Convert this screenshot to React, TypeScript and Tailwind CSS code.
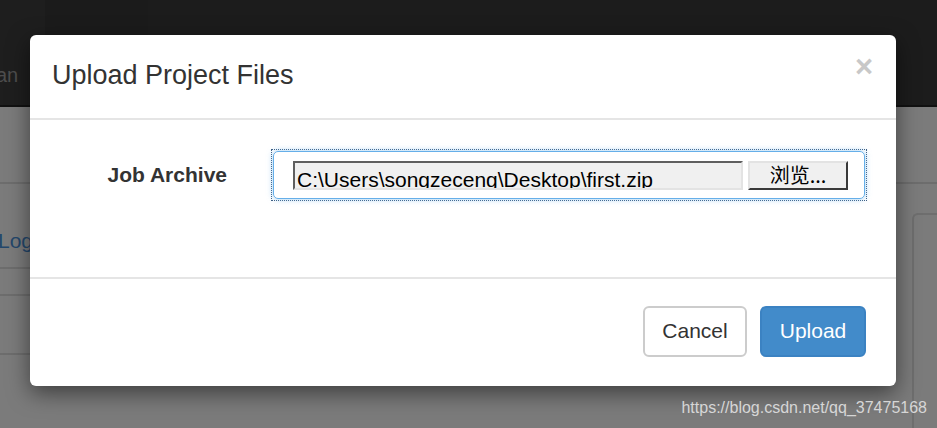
import React from 'react'

// Upload dialog over a dimmed page (150% scaled bootstrap look)
export default function App() {
  return (
    <div className="relative w-[937px] h-[428px] overflow-hidden bg-[#7b7b7b] font-['Liberation_Sans',Arial,sans-serif]">
      {/* dimmed page behind the dialog */}
      <div className="flex h-[107px] bg-[#1c1c1c] border-b-2 border-[#111]">
        <div className="w-[45px] bg-[#1e1e1e] pt-[65px]">
          <span className="block -ml-[4px] text-[20px] leading-none text-[#4d4d4d]">an</span>
        </div>
        <div className="w-[103px] bg-[#1b1b1b]" />
        <div className="flex-1" />
      </div>
      <div className="h-[77px] border-b-2 border-[#6d6d6d]" />
      <div className="flex">
        <div className="w-[60px]">
          <div className="h-[83px] flex items-center">
            <span className="-ml-[2px] mt-[30px] text-[21px] leading-none text-[#24476b]">Log</span>
          </div>
          <div className="h-[27px] border-t-2 border-[#6d6d6d]" />
          <div className="h-[61px] border-t-2 border-b-2 border-[#6d6d6d]" />
        </div>
        <div className="flex-1" />
        <div className="w-[25px] pt-[29px]">
          <div className="h-[240px] rounded-tl-[6px] border-l-2 border-t-2 border-[#6e6e6e]" />
        </div>
      </div>

      {/* modal */}
      <div className="absolute left-[30px] top-[35px] w-[866px] h-[351px] bg-white rounded-[6px] shadow-[0_7px_22px_rgba(0,0,0,0.5)] flex flex-col">
        <div className="h-[85px] shrink-0 flex items-center justify-between px-[22px] border-b-2 border-[#e5e5e5]">
          <h4 className="text-[27px] text-[#333] leading-none -mt-[2px]">Upload Project Files</h4>
          <span className="text-[31px] font-bold text-[#c8c8c8] leading-none -mt-[20px] mr-[1px]">×</span>
        </div>
        <div className="h-[159px] shrink-0 border-b-2 border-[#e5e5e5] pt-[29px] px-[22px] flex items-start">
          <div className="flex items-center">
            <label className="block shrink-0 w-[196px] pr-[21px] text-right text-[21px] font-bold text-[#333]">Job Archive</label>
            <div className="shrink-0 ml-[23px] w-[596px] h-[52px] border border-dotted border-[#3d5d80] p-px">
              <div className="h-full rounded-[5px] border border-[#66afe9] shadow-[0_0_6px_rgba(102,175,233,0.6)] flex items-center pl-[19px]">
                <div className="w-[450px] h-[29px] overflow-hidden bg-[#f0f0f0] border-2 border-t-[#5f5f5f] border-l-[#5f5f5f] border-b-[#e3e3e3] border-r-[#e3e3e3] pl-[2px]">
                  <span className="block text-[21px] leading-[34px] text-black whitespace-nowrap">C:\Users\songzeceng\Desktop\first.zip</span>
                </div>
                <div className="ml-[5px] w-[100px] h-[29px] bg-[#f0f0f0] border-2 border-t-[#e3e3e3] border-l-[#e3e3e3] border-b-[#3a3a3a] border-r-[#3a3a3a] flex items-center justify-center">
                  <span className="text-[20px] leading-none text-black font-['Noto_Sans_CJK_SC','Liberation_Sans',sans-serif]">浏览...</span>
                </div>
              </div>
            </div>
          </div>
        </div>
        <div className="flex-1 flex items-center justify-end gap-[13px] pr-[30px] pb-[3px]">
          <button className="w-[104px] h-[51px] rounded-[6px] border-2 border-[#ccc] bg-white text-[21px] text-[#333]">Cancel</button>
          <button className="w-[106px] h-[51px] rounded-[6px] border-2 border-[#3b82c2] bg-[#428bca] text-[21px] text-white">Upload</button>
        </div>
      </div>

      {/* watermark */}
      <div className="absolute right-[10px] top-[398px] text-[16px] leading-[20px] text-[#d6d6d6]">https://blog.csdn.net/qq_37475168</div>
    </div>
  )
}
